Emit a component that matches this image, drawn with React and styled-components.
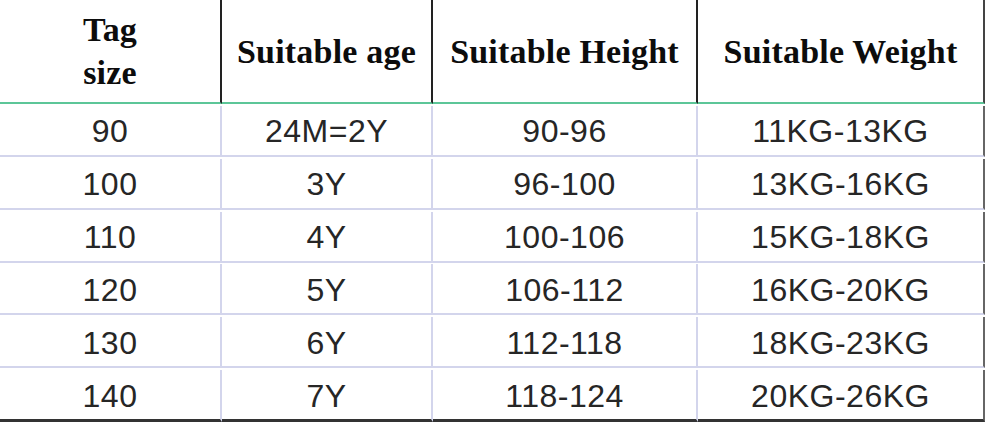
import styled, { createGlobalStyle } from "styled-components";

const Global = createGlobalStyle`
  html, body {
    margin: 0;
    padding: 0;
    background: #fff;
  }
`;

const Table = styled.div`
  display: grid;
  grid-template-columns: 222px 211px 265px 287px;
  width: 985px;
  height: 424px;
  overflow: hidden;
  background: #fff;
`;

const HeadCell = styled.div`
  height: 102px;
  display: flex;
  align-items: center;
  justify-content: center;
  text-align: center;
  font-family: "Liberation Serif", "Times New Roman", serif;
  font-weight: 700;
  font-size: 34px;
  letter-spacing: 0.2px;
  line-height: 43px;
  color: #0c0c0c;
  border-right: 2px solid ${(p) => (p.$last ? "#444" : "#222")};
  border-bottom: 2px solid #5cc698;
`;

const Cell = styled.div`
  height: ${(p) => (p.$lastRow ? "52px" : "51px")};
  box-sizing: border-box;
  padding-top: 3px;
  display: flex;
  align-items: center;
  justify-content: center;
  font-family: "Liberation Sans", Arial, sans-serif;
  font-size: 32px;
  letter-spacing: 0.5px;
  color: #262626;
  border-right: 2px solid ${(p) => (p.$last ? "#666" : "#d3d5ec")};
  border-bottom: ${(p) => (p.$lastRow ? "3px solid #333" : "2px solid #d3d5ec")};
`;

const headers = [
  <>Tag<br />size</>,
  "Suitable age",
  "Suitable Height",
  "Suitable Weight",
];

const rows = [
  ["90", "24M=2Y", "90-96", "11KG-13KG"],
  ["100", "3Y", "96-100", "13KG-16KG"],
  ["110", "4Y", "100-106", "15KG-18KG"],
  ["120", "5Y", "106-112", "16KG-20KG"],
  ["130", "6Y", "112-118", "18KG-23KG"],
  ["140", "7Y", "118-124", "20KG-26KG"],
];

export default function App() {
  return (
    <>
      <Global />
      <Table>
        {headers.map((h, i) => (
          <HeadCell key={i} $last={i === 3}>{h}</HeadCell>
        ))}
        {rows.map((r, ri) =>
          r.map((v, ci) => (
            <Cell key={ri + "-" + ci} $last={ci === 3} $lastRow={ri === rows.length - 1}>
              {v}
            </Cell>
          ))
        )}
      </Table>
    </>
  );
}
